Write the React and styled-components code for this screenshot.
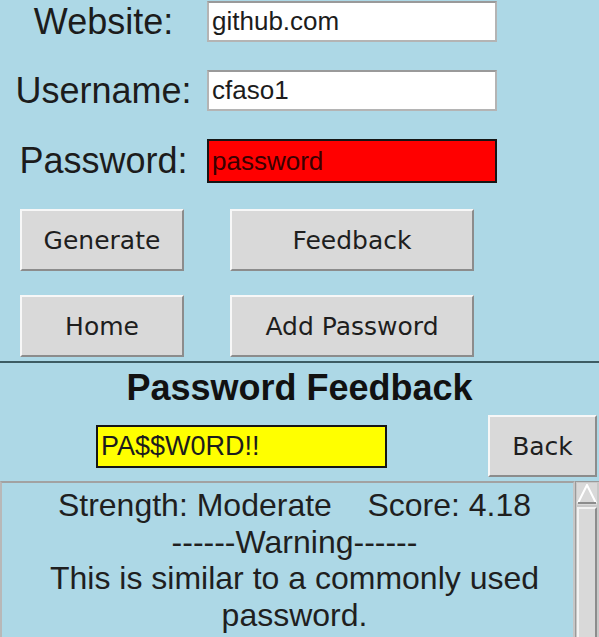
import React from 'react';
import styled, { createGlobalStyle } from 'styled-components';

const GlobalStyle = createGlobalStyle`
  html, body {
    margin: 0;
    padding: 0;
    background: #add8e6;
  }
  #root {
    width: 599px;
    height: 637px;
    overflow: hidden;
  }
`;

const Window = styled.div`
  width: 599px;
  height: 637px;
  background: #add8e6;
  display: flex;
  flex-direction: column;
  overflow: hidden;
`;

const Form = styled.div`
  display: grid;
  grid-template-columns: 207px 290px;
  row-gap: 28px;
  align-items: center;
  padding-top: 1px;
`;

const FieldLabel = styled.div`
  font-family: 'Liberation Sans', Arial, sans-serif;
  font-size: 36px;
  line-height: 40px;
  color: #1c1c1c;
  text-align: center;
`;

const entryColors = {
  plain: { bg: '#ffffff', border: '#b4b4b4', top: '#9a9a9a' },
  error: { bg: '#ff0000', border: '#151515', top: '#151515' },
  match: { bg: '#ffff00', border: '#151515', top: '#151515' },
};

const Entry = styled.div`
  box-sizing: border-box;
  width: ${({ $w }) => $w || 290}px;
  height: ${({ $h }) => $h || 41}px;
  display: flex;
  align-items: center;
  padding-left: 3px;
  background: ${({ $variant }) => entryColors[$variant || 'plain'].bg};
  border: 2px solid ${({ $variant }) => entryColors[$variant || 'plain'].border};
  border-top-color: ${({ $variant }) => entryColors[$variant || 'plain'].top};
  font-family: 'Liberation Sans', Arial, sans-serif;
  font-size: ${({ $size }) => $size || 26}px;
  color: ${({ $variant }) => ($variant === 'error' ? '#3a0000' : '#1c1c1c')};
  white-space: pre;
`;

const ButtonGrid = styled.div`
  display: grid;
  grid-template-columns: 164px 244px;
  column-gap: 46px;
  row-gap: 24px;
  padding-left: 20px;
  margin-top: 26px;
`;

const Button = styled.button`
  box-sizing: border-box;
  width: ${({ $w }) => ($w ? `${$w}px` : '100%')};
  height: 62px;
  margin: 0;
  padding: 0;
  background: #d9d9d9;
  border: 2px solid #8c8c8c;
  border-top-color: #f7f7f7;
  border-left-color: #f7f7f7;
  font-family: 'DejaVu Sans', sans-serif;
  font-size: 25px;
  color: #1e1e1e;
  cursor: pointer;
`;

const Divider = styled.div`
  height: 2px;
  margin-top: 4px;
  background: #3d5c63;
`;

const FeedbackPanel = styled.div`
  display: flex;
  flex-direction: column;
  flex: 1;
  min-height: 0;
`;

const Title = styled.div`
  margin-top: 5px;
  font-family: 'Liberation Sans', Arial, sans-serif;
  font-weight: bold;
  font-size: 36px;
  line-height: 40px;
  color: #111;
  text-align: center;
`;

const CheckRow = styled.div`
  display: flex;
  align-items: center;
  height: 62px;
  margin-top: 7px;
  padding-left: 96px;
  padding-right: 2px;

  & > button {
    margin-left: auto;
  }
`;

const ResultArea = styled.div`
  display: flex;
  flex: 1;
  min-height: 0;
  margin-top: 4px;
`;

const ResultText = styled.div`
  box-sizing: border-box;
  flex: 1;
  padding: 4px 0 0 14px;
  background: #add8e6;
  border: 2px solid #c6c6c6;
  border-top-color: #a2a2a2;
  border-left-color: #b8b8b8;
  border-bottom: none;
  font-family: 'Liberation Sans', Arial, sans-serif;
  font-size: 32px;
  line-height: 36.6px;
  color: #1f1f1f;
  text-align: center;
  white-space: pre;
`;

const Scrollbar = styled.div`
  box-sizing: border-box;
  width: 24px;
  display: flex;
  flex-direction: column;
  background: #c8c8c8;
  border-left: 1px solid #9a9a9a;
  border-top: 1px solid #9a9a9a;
  padding: 1px 2px 0 1px;
`;

const ArrowButton = styled.div`
  height: 22px;
  display: flex;
  align-items: center;
  justify-content: center;
  background: #d9d9d9;
`;

const Thumb = styled.div`
  flex: 1;
  margin-top: 2px;
  background: #d9d9d9;
  border-left: 2px solid #f2f2f2;
  border-top: 2px solid #f2f2f2;
  border-right: 2px solid #8c8c8c;
`;

const UpArrow = () => (
  <svg width="20" height="20" viewBox="0 0 20 20">
    <polygon points="10,1 19,19 1,19" fill="#d9d9d9" />
    <polyline points="1,19 10,1 19,19" fill="none" stroke="#ffffff" strokeWidth="2" />
    <line x1="1" y1="19" x2="19" y2="19" stroke="#8c8c8c" strokeWidth="2" />
  </svg>
);

export default function App() {
  return (
    <>
      <GlobalStyle />
      <Window>
        <Form>
          <FieldLabel>Website:</FieldLabel>
          <Entry>github.com</Entry>
          <FieldLabel>Username:</FieldLabel>
          <Entry>cfaso1</Entry>
          <FieldLabel>Password:</FieldLabel>
          <Entry $variant="error" $h={44}>password</Entry>
        </Form>
        <ButtonGrid>
          <Button>Generate</Button>
          <Button>Feedback</Button>
          <Button>Home</Button>
          <Button>Add Password</Button>
        </ButtonGrid>
        <Divider />
        <FeedbackPanel>
          <Title>Password Feedback</Title>
          <CheckRow>
            <Entry $variant="match" $w={291} $h={43} $size={27}>PA$$W0RD!!</Entry>
            <Button $w={109}>Back</Button>
          </CheckRow>
          <ResultArea>
            <ResultText>
              <div>Strength: Moderate    Score: 4.18</div>
              <div>------Warning------</div>
              <div>This is similar to a commonly used</div>
              <div>password.</div>
            </ResultText>
            <Scrollbar>
              <ArrowButton>
                <UpArrow />
              </ArrowButton>
              <Thumb />
            </Scrollbar>
          </ResultArea>
        </FeedbackPanel>
      </Window>
    </>
  );
}
